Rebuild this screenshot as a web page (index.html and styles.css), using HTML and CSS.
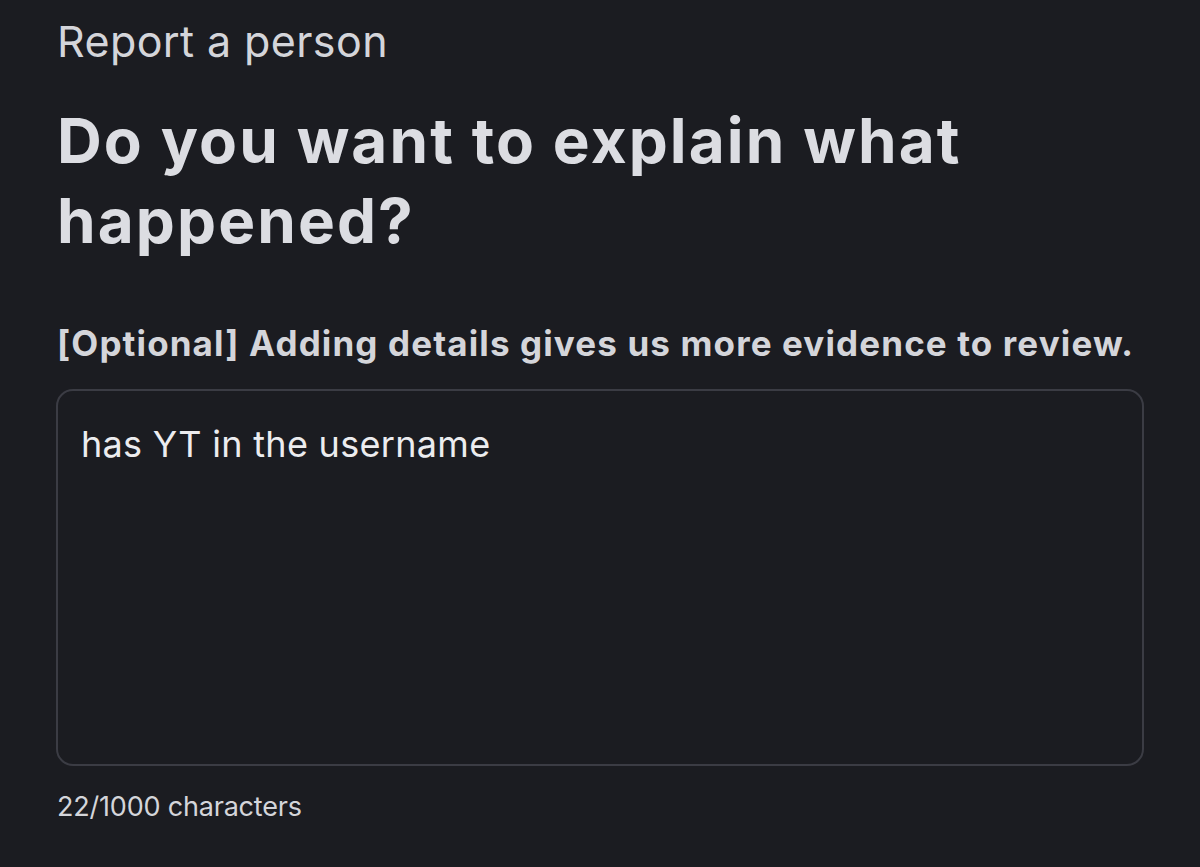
FILE: index.html
```html
<!DOCTYPE html>
<html lang="en">
<head>
<meta charset="utf-8">
<title>Report a person</title>
<link rel="stylesheet" href="styles.css">
</head>
<body>
<main class="page">
  <div class="eyebrow">Report a person</div>
  <h1 class="title">Do you want to explain what happened?</h1>
  <p class="hint">[Optional] Adding details gives us more evidence to review.</p>
  <div class="field">
    <div class="field-text">has YT in the username</div>
  </div>
  <div class="counter">22/1000 characters</div>
</main>
</body>
</html>
```
FILE: styles.css
```css
html, body {
  margin: 0;
  padding: 0;
  background: #1b1c21;
  height: 100%;
  overflow: hidden;
}
.page {
  font-family: Inter, "Open Sans", "Liberation Sans", sans-serif;
  color: #dcdde2;
  padding: 15px 56px 0 56px;
  display: flex;
  flex-direction: column;
}
.eyebrow {
  font-size: 43px;
  line-height: 52px;
  font-weight: 400;
  letter-spacing: 0.4px;
  color: #d4d5da;
  padding-left: 1px;
}
.title {
  margin: 34px 0 0 0;
  padding-left: 1px;
  font-size: 62px;
  line-height: 80px;
  font-weight: 700;
  letter-spacing: 2.1px;
  color: #dcdde2;
  max-width: 980px;
}
.hint {
  margin: 60px 0 0 0;
  padding-left: 1px;
  font-size: 35px;
  line-height: 44px;
  font-weight: 650;
  letter-spacing: 1.12px;
  color: #d4d5da;
  white-space: nowrap;
}
.field {
  margin-top: 24px;
  height: 377px;
  border: 2px solid #3b3c44;
  border-radius: 17px;
  padding: 31px 23px;
  box-sizing: border-box;
}
.field-text {
  font-size: 36px;
  line-height: 44px;
  letter-spacing: 0.3px;
  color: #ececef;
}
.counter {
  margin-top: 23px;
  padding-left: 1px;
  font-size: 27px;
  line-height: 36px;
  letter-spacing: -0.2px;
  color: #d4d5da;
}
```
